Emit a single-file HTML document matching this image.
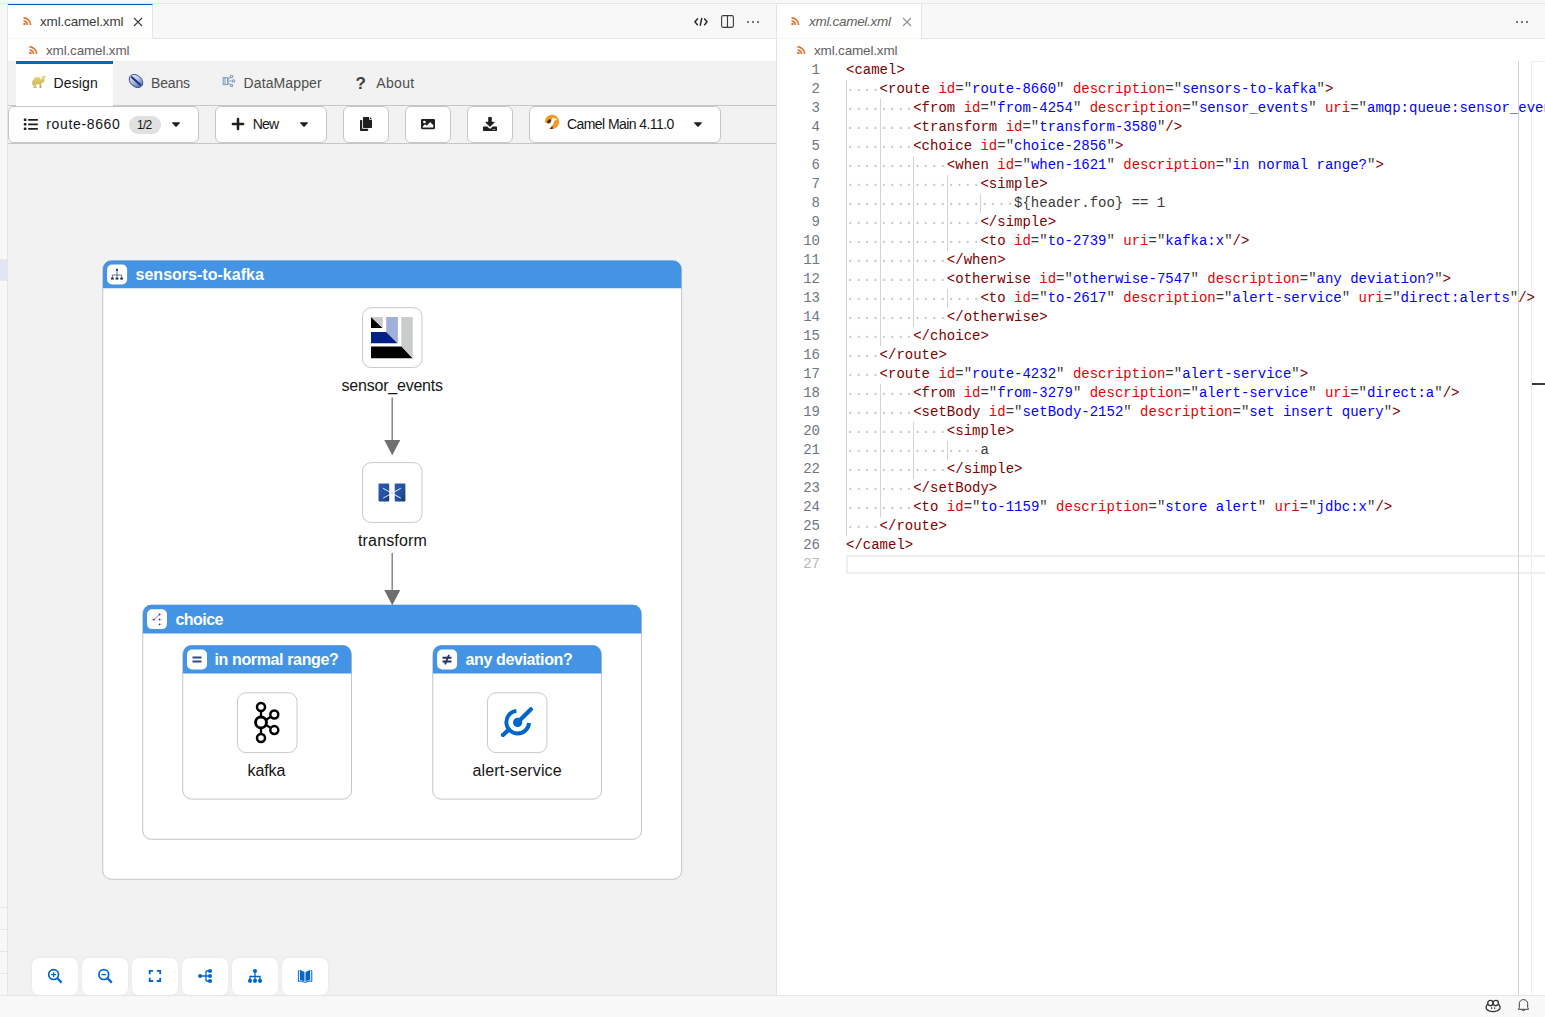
<!DOCTYPE html>
<html lang="en">
<head>
<meta charset="utf-8">
<title>xml.camel.xml</title>
<style>
*{box-sizing:border-box;margin:0;padding:0}
html,body{width:1545px;height:1017px;overflow:hidden;background:#f8f8f8}
body{position:relative;font-family:"Liberation Sans",sans-serif;font-size:13px;color:#3b3b3b}
.abs{position:absolute}
/* ---------- vscode chrome ---------- */
#topline{left:0;top:3px;width:1545px;height:1px;background:#e5e5e5}
#sidebar{left:0;top:4px;width:7px;height:991px;background:#f8f8f8}
#sideborder{left:7px;top:4px;width:1px;height:991px;background:#e5e5e5}
#sidesel{left:0;top:259px;width:7px;height:22px;background:#e4e6f1}
.tabbar{top:4px;height:35px;background:#f8f8f8;border-bottom:1px solid #e5e5e5}
.tab{top:4px;height:35px;background:#fff;border-right:1px solid #e5e5e5}
.tabtxt{font-size:13px;white-space:nowrap;line-height:16px}
.crumb{top:39px;height:22px;background:#fff}
#statusbar{left:0;top:995px;width:1545px;height:22px;background:#f8f8f8;border-top:1px solid #e5e5e5}
#split{left:776px;top:4px;width:1px;height:991px;background:#e5e5e5}
/* ---------- kaoto ---------- */
#kaoto{left:8px;top:61px;width:768px;height:934px;background:#f2f2f2;overflow:hidden}
.tx{white-space:nowrap;line-height:1;color:#151515}
.btn{background:#fff;border:1px solid #c5c5c5;border-radius:6px;height:37px;top:106px}
.ctl{background:#fff;border-radius:7px;width:46px;height:37px;top:958px;box-shadow:0 0 3px rgba(0,0,0,.07)}
.gt{white-space:nowrap;line-height:1;font-size:16px;font-weight:700;color:#fff}
.nl{white-space:nowrap;line-height:1;font-size:16px;color:#151515}
/* ---------- editor ---------- */
#editor{left:777px;top:61px;width:768px;height:934px;background:#fff;overflow:hidden}
.ln{left:0;width:43px;text-align:right;font:14px/19px "Liberation Mono",monospace;color:#6e7681;height:19px}
.cl{left:69px;font:14px/19px "Liberation Mono",monospace;color:#3b3b3b;white-space:pre;height:19px}
.ig{width:1px;height:19px;background:#d3d3d3}
.t{color:#800000}.a{color:#e50000}.v{color:#0000ff}.w{color:#c4c4c4;position:relative;top:0.6px}
</style>
</head>
<body>
<div class="abs" id="topline"></div>
<div class="abs" id="sidebar"></div>
<div class="abs" id="sidesel"></div>
<div class="abs" id="sideborder"></div>
<div class="abs" style="left:0;top:907px;width:7px;height:1px;background:#e5e5e5"></div>
<div class="abs" style="left:0;top:929px;width:7px;height:1px;background:#e5e5e5"></div>
<div class="abs" style="left:0;top:951px;width:7px;height:1px;background:#e5e5e5"></div>
<div class="abs" style="left:0;top:973px;width:7px;height:1px;background:#e5e5e5"></div>

<!-- left group tabs -->
<div class="abs tabbar" style="left:8px;width:768px"></div>
<div class="abs tab" style="left:8px;width:145px;border-top:1px solid #005fb8;border-bottom:1px solid #f5f5f5"></div>
<div class="abs tabtxt" style="left:40px;top:13.6px;font-size:13.5px;letter-spacing:-0.17px">xml.camel.xml</div>
<div class="abs crumb" style="left:8px;width:768px"></div>
<div class="abs tabtxt" style="left:46px;top:42.6px;color:#616161;font-size:13.5px;letter-spacing:-0.17px">xml.camel.xml</div>

<!-- right group tabs -->
<div class="abs" id="split"></div>
<div class="abs tabbar" style="left:777px;width:768px"></div>
<div class="abs tab" style="left:777px;width:145px;border-bottom:1px solid #f5f5f5"></div>
<div class="abs tabtxt" style="left:809px;top:13.6px;font-style:italic;color:#616161;font-size:13.5px;letter-spacing:-0.3px">xml.camel.xml</div>
<div class="abs crumb" style="left:777px;width:768px"></div>
<div class="abs tabtxt" style="left:814px;top:42.6px;color:#616161;font-size:13.5px;letter-spacing:-0.17px">xml.camel.xml</div>

<!-- KAOTO -->
<div class="abs" id="kaoto"></div>
<!-- PF tabs -->
<div class="abs" style="left:8px;top:105px;width:768px;height:1px;background:#c7c7c7"></div>
<div class="abs" style="left:16px;top:61px;width:97px;height:45px;background:#fff;border-top:3px solid #0066cc"></div>
<div class="abs tx" style="left:53.5px;top:76.2px;font-size:14px;letter-spacing:0.14px">Design</div>
<div class="abs tx" style="left:151px;top:76.2px;font-size:14px;letter-spacing:-0.17px;color:#4d4d4d">Beans</div>
<div class="abs tx" style="left:243.5px;top:76.2px;font-size:14px;letter-spacing:0.12px;color:#4d4d4d">DataMapper</div>
<div class="abs tx" style="left:376.25px;top:76.2px;font-size:14px;letter-spacing:0.33px;color:#4d4d4d">About</div>
<div class="abs tx" style="left:355.5px;top:74.6px;font-size:17px;font-weight:700;color:#3d3d3d">?</div>

<!-- toolbar -->
<div class="abs" style="left:8px;top:143px;width:768px;height:1px;background:#c7c7c7"></div>
<div class="abs btn" style="left:8px;width:191px"></div>
<div class="abs btn" style="left:215px;width:112px"></div>
<div class="abs btn" style="left:343px;width:46px"></div>
<div class="abs btn" style="left:405px;width:46px"></div>
<div class="abs btn" style="left:467px;width:46px"></div>
<div class="abs btn" style="left:529px;width:192px"></div>
<div class="abs tx" style="left:46.25px;top:117.4px;font-size:14px;letter-spacing:0.65px">route-8660</div>
<div class="abs" style="left:129px;top:116px;width:32px;height:18px;border-radius:9px;background:#e0e0e0"></div>
<div class="abs tx" style="left:137px;top:119.3px;font-size:12px;letter-spacing:-0.75px">1/2</div>
<div class="abs tx" style="left:252.75px;top:117.4px;font-size:14px;letter-spacing:-0.82px">New</div>
<div class="abs tx" style="left:567px;top:117.4px;font-size:14px;letter-spacing:-0.57px">Camel Main 4.11.0</div>

<!-- canvas: groups + nodes (svg) -->
<svg class="abs" style="left:90px;top:250px" width="610" height="640" viewBox="90 250 610 640">
<rect x="102.75" y="260.9" width="578.85" height="618.35" rx="8.5" fill="#fff" stroke="#c4c4c4" stroke-width="1"/>
<path d="M102.95 288.3V268.90a8.5 8.5 0 0 1 8.5 -8.5H672.90a8.5 8.5 0 0 1 8.5 8.5V288.3z" fill="#4394e5"/>
<rect x="107.1" y="264.6" width="20" height="19.8" rx="5" fill="#fff"/>
<rect x="142.75" y="605.3" width="498.75" height="233.95" rx="8.5" fill="#fff" stroke="#c4c4c4" stroke-width="1"/>
<path d="M142.95 633.4V613.30a8.5 8.5 0 0 1 8.5 -8.5H632.80a8.5 8.5 0 0 1 8.5 8.5V633.4z" fill="#4394e5"/>
<rect x="147" y="609.3" width="20" height="19.8" rx="5" fill="#fff"/>
<rect x="182.75" y="645.75" width="168.75" height="153.35" rx="8.5" fill="#fff" stroke="#c4c4c4" stroke-width="1"/>
<path d="M182.95 673.5V653.75a8.5 8.5 0 0 1 8.5 -8.5H342.80a8.5 8.5 0 0 1 8.5 8.5V673.5z" fill="#4394e5"/>
<rect x="187" y="649.6" width="20" height="19.8" rx="5" fill="#fff"/>
<rect x="432.75" y="645.75" width="168.75" height="153.35" rx="8.5" fill="#fff" stroke="#c4c4c4" stroke-width="1"/>
<path d="M432.95 673.5V653.75a8.5 8.5 0 0 1 8.5 -8.5H592.80a8.5 8.5 0 0 1 8.5 8.5V673.5z" fill="#4394e5"/>
<rect x="437.1" y="649.6" width="20" height="19.8" rx="5" fill="#fff"/>
<rect x="362.5" y="307.7" width="59.5" height="59.8" rx="8.5" fill="#fff" stroke="#cacaca" stroke-width="1"/>
<rect x="362.5" y="462.6" width="59.5" height="59.8" rx="8.5" fill="#fff" stroke="#cacaca" stroke-width="1"/>
<rect x="237.5" y="692.8" width="59.5" height="59.8" rx="8.5" fill="#fff" stroke="#cacaca" stroke-width="1"/>
<rect x="487.5" y="692.8" width="59.5" height="59.8" rx="8.5" fill="#fff" stroke="#cacaca" stroke-width="1"/>
</svg>
<div class="abs gt" style="left:135.5px;top:266.7px;letter-spacing:0.02px">sensors-to-kafka</div>
<!-- choice group -->
<div class="abs gt" style="left:175.5px;top:611.5px;letter-spacing:-0.56px">choice</div>
<!-- when group -->
<div class="abs gt" style="left:214.5px;top:651.8px;letter-spacing:-0.37px">in normal range?</div>
<!-- otherwise group -->
<div class="abs gt" style="left:465.5px;top:651.8px;letter-spacing:-0.37px">any deviation?</div>

<!-- nodes -->
<div class="abs nl" style="left:341.5px;top:378.3px;letter-spacing:-0.21px">sensor_events</div>
<div class="abs nl" style="left:358px;top:532.7px;letter-spacing:0.16px">transform</div>
<div class="abs nl" style="left:247.5px;top:763.3px;letter-spacing:-0.09px">kafka</div>
<div class="abs nl" style="left:472.5px;top:763.3px;letter-spacing:0.17px">alert-service</div>

<!-- edges -->
<svg class="abs" style="left:380px;top:395px" width="24" height="215" viewBox="380 395 24 215">
<path d="M392.25 397.5V441" stroke="#8a8d90" stroke-width="1.6" fill="none"/>
<path d="M384.25 440h16l-8 15.25z" fill="#6f6f6f"/>
<path d="M392.25 553V591" stroke="#8a8d90" stroke-width="1.6" fill="none"/>
<path d="M384.25 590h16l-8 15.25z" fill="#6f6f6f"/>
</svg>

<!-- control bar -->
<div class="abs ctl" style="left:32px"></div>
<div class="abs ctl" style="left:82px"></div>
<div class="abs ctl" style="left:132px"></div>
<div class="abs ctl" style="left:182px"></div>
<div class="abs ctl" style="left:232px"></div>
<div class="abs ctl" style="left:282px"></div>


<!-- EDITOR -->
<div class="abs" id="editor">
<div class="abs" style="left:69px;top:494px;width:700px;height:19px;border:2px solid #eeeeee;border-right:0"></div>
<div class="abs" style="left:741px;top:0;width:1px;height:934px;background:#d4d4d4"></div>
<div class="abs" style="left:754px;top:0;width:14px;height:934px;border-left:1px solid #eeeeee;border-top:1px solid #eeeeee"></div>
<div class="abs" style="left:755px;top:322px;width:13px;height:2px;background:#3b3b3b"></div>
<div class="abs ln" style="top:0px">1</div>
<div class="abs cl" style="top:0px"><span class="t">&lt;camel</span><span class="t">&gt;</span></div>
<div class="abs ln" style="top:19px">2</div>
<div class="abs cl" style="top:19px"><span class="w">····</span><span class="t">&lt;route</span> <span class="a">id</span>=&quot;<span class="v">route-8660</span>&quot; <span class="a">description</span>=&quot;<span class="v">sensors-to-kafka</span>&quot;<span class="t">&gt;</span></div>
<div class="abs ig" style="left:69px;top:19px"></div>
<div class="abs ln" style="top:38px">3</div>
<div class="abs cl" style="top:38px"><span class="w">········</span><span class="t">&lt;from</span> <span class="a">id</span>=&quot;<span class="v">from-4254</span>&quot; <span class="a">description</span>=&quot;<span class="v">sensor_events</span>&quot; <span class="a">uri</span>=&quot;<span class="v">amqp:queue:sensor_events</span>&quot;<span class="t">/&gt;</span></div>
<div class="abs ig" style="left:69px;top:38px"></div>
<div class="abs ig" style="left:103px;top:38px"></div>
<div class="abs ln" style="top:57px">4</div>
<div class="abs cl" style="top:57px"><span class="w">········</span><span class="t">&lt;transform</span> <span class="a">id</span>=&quot;<span class="v">transform-3580</span>&quot;<span class="t">/&gt;</span></div>
<div class="abs ig" style="left:69px;top:57px"></div>
<div class="abs ig" style="left:103px;top:57px"></div>
<div class="abs ln" style="top:76px">5</div>
<div class="abs cl" style="top:76px"><span class="w">········</span><span class="t">&lt;choice</span> <span class="a">id</span>=&quot;<span class="v">choice-2856</span>&quot;<span class="t">&gt;</span></div>
<div class="abs ig" style="left:69px;top:76px"></div>
<div class="abs ig" style="left:103px;top:76px"></div>
<div class="abs ln" style="top:95px">6</div>
<div class="abs cl" style="top:95px"><span class="w">············</span><span class="t">&lt;when</span> <span class="a">id</span>=&quot;<span class="v">when-1621</span>&quot; <span class="a">description</span>=&quot;<span class="v">in normal range?</span>&quot;<span class="t">&gt;</span></div>
<div class="abs ig" style="left:69px;top:95px"></div>
<div class="abs ig" style="left:103px;top:95px"></div>
<div class="abs ig" style="left:136px;top:95px"></div>
<div class="abs ln" style="top:114px">7</div>
<div class="abs cl" style="top:114px"><span class="w">················</span><span class="t">&lt;simple</span><span class="t">&gt;</span></div>
<div class="abs ig" style="left:69px;top:114px"></div>
<div class="abs ig" style="left:103px;top:114px"></div>
<div class="abs ig" style="left:136px;top:114px"></div>
<div class="abs ig" style="left:170px;top:114px"></div>
<div class="abs ln" style="top:133px">8</div>
<div class="abs cl" style="top:133px"><span class="w">····················</span>${header.foo} == 1</div>
<div class="abs ig" style="left:69px;top:133px"></div>
<div class="abs ig" style="left:103px;top:133px"></div>
<div class="abs ig" style="left:136px;top:133px"></div>
<div class="abs ig" style="left:170px;top:133px"></div>
<div class="abs ig" style="left:203px;top:133px"></div>
<div class="abs ln" style="top:152px">9</div>
<div class="abs cl" style="top:152px"><span class="w">················</span><span class="t">&lt;/simple</span><span class="t">&gt;</span></div>
<div class="abs ig" style="left:69px;top:152px"></div>
<div class="abs ig" style="left:103px;top:152px"></div>
<div class="abs ig" style="left:136px;top:152px"></div>
<div class="abs ig" style="left:170px;top:152px"></div>
<div class="abs ln" style="top:171px">10</div>
<div class="abs cl" style="top:171px"><span class="w">················</span><span class="t">&lt;to</span> <span class="a">id</span>=&quot;<span class="v">to-2739</span>&quot; <span class="a">uri</span>=&quot;<span class="v">kafka:x</span>&quot;<span class="t">/&gt;</span></div>
<div class="abs ig" style="left:69px;top:171px"></div>
<div class="abs ig" style="left:103px;top:171px"></div>
<div class="abs ig" style="left:136px;top:171px"></div>
<div class="abs ig" style="left:170px;top:171px"></div>
<div class="abs ln" style="top:190px">11</div>
<div class="abs cl" style="top:190px"><span class="w">············</span><span class="t">&lt;/when</span><span class="t">&gt;</span></div>
<div class="abs ig" style="left:69px;top:190px"></div>
<div class="abs ig" style="left:103px;top:190px"></div>
<div class="abs ig" style="left:136px;top:190px"></div>
<div class="abs ln" style="top:209px">12</div>
<div class="abs cl" style="top:209px"><span class="w">············</span><span class="t">&lt;otherwise</span> <span class="a">id</span>=&quot;<span class="v">otherwise-7547</span>&quot; <span class="a">description</span>=&quot;<span class="v">any deviation?</span>&quot;<span class="t">&gt;</span></div>
<div class="abs ig" style="left:69px;top:209px"></div>
<div class="abs ig" style="left:103px;top:209px"></div>
<div class="abs ig" style="left:136px;top:209px"></div>
<div class="abs ln" style="top:228px">13</div>
<div class="abs cl" style="top:228px"><span class="w">················</span><span class="t">&lt;to</span> <span class="a">id</span>=&quot;<span class="v">to-2617</span>&quot; <span class="a">description</span>=&quot;<span class="v">alert-service</span>&quot; <span class="a">uri</span>=&quot;<span class="v">direct:alerts</span>&quot;<span class="t">/&gt;</span></div>
<div class="abs ig" style="left:69px;top:228px"></div>
<div class="abs ig" style="left:103px;top:228px"></div>
<div class="abs ig" style="left:136px;top:228px"></div>
<div class="abs ig" style="left:170px;top:228px"></div>
<div class="abs ln" style="top:247px">14</div>
<div class="abs cl" style="top:247px"><span class="w">············</span><span class="t">&lt;/otherwise</span><span class="t">&gt;</span></div>
<div class="abs ig" style="left:69px;top:247px"></div>
<div class="abs ig" style="left:103px;top:247px"></div>
<div class="abs ig" style="left:136px;top:247px"></div>
<div class="abs ln" style="top:266px">15</div>
<div class="abs cl" style="top:266px"><span class="w">········</span><span class="t">&lt;/choice</span><span class="t">&gt;</span></div>
<div class="abs ig" style="left:69px;top:266px"></div>
<div class="abs ig" style="left:103px;top:266px"></div>
<div class="abs ln" style="top:285px">16</div>
<div class="abs cl" style="top:285px"><span class="w">····</span><span class="t">&lt;/route</span><span class="t">&gt;</span></div>
<div class="abs ig" style="left:69px;top:285px"></div>
<div class="abs ln" style="top:304px">17</div>
<div class="abs cl" style="top:304px"><span class="w">····</span><span class="t">&lt;route</span> <span class="a">id</span>=&quot;<span class="v">route-4232</span>&quot; <span class="a">description</span>=&quot;<span class="v">alert-service</span>&quot;<span class="t">&gt;</span></div>
<div class="abs ig" style="left:69px;top:304px"></div>
<div class="abs ln" style="top:323px">18</div>
<div class="abs cl" style="top:323px"><span class="w">········</span><span class="t">&lt;from</span> <span class="a">id</span>=&quot;<span class="v">from-3279</span>&quot; <span class="a">description</span>=&quot;<span class="v">alert-service</span>&quot; <span class="a">uri</span>=&quot;<span class="v">direct:a</span>&quot;<span class="t">/&gt;</span></div>
<div class="abs ig" style="left:69px;top:323px"></div>
<div class="abs ig" style="left:103px;top:323px"></div>
<div class="abs ln" style="top:342px">19</div>
<div class="abs cl" style="top:342px"><span class="w">········</span><span class="t">&lt;setBody</span> <span class="a">id</span>=&quot;<span class="v">setBody-2152</span>&quot; <span class="a">description</span>=&quot;<span class="v">set insert query</span>&quot;<span class="t">&gt;</span></div>
<div class="abs ig" style="left:69px;top:342px"></div>
<div class="abs ig" style="left:103px;top:342px"></div>
<div class="abs ln" style="top:361px">20</div>
<div class="abs cl" style="top:361px"><span class="w">············</span><span class="t">&lt;simple</span><span class="t">&gt;</span></div>
<div class="abs ig" style="left:69px;top:361px"></div>
<div class="abs ig" style="left:103px;top:361px"></div>
<div class="abs ig" style="left:136px;top:361px"></div>
<div class="abs ln" style="top:380px">21</div>
<div class="abs cl" style="top:380px"><span class="w">················</span>a</div>
<div class="abs ig" style="left:69px;top:380px"></div>
<div class="abs ig" style="left:103px;top:380px"></div>
<div class="abs ig" style="left:136px;top:380px"></div>
<div class="abs ig" style="left:170px;top:380px"></div>
<div class="abs ln" style="top:399px">22</div>
<div class="abs cl" style="top:399px"><span class="w">············</span><span class="t">&lt;/simple</span><span class="t">&gt;</span></div>
<div class="abs ig" style="left:69px;top:399px"></div>
<div class="abs ig" style="left:103px;top:399px"></div>
<div class="abs ig" style="left:136px;top:399px"></div>
<div class="abs ln" style="top:418px">23</div>
<div class="abs cl" style="top:418px"><span class="w">········</span><span class="t">&lt;/setBody</span><span class="t">&gt;</span></div>
<div class="abs ig" style="left:69px;top:418px"></div>
<div class="abs ig" style="left:103px;top:418px"></div>
<div class="abs ln" style="top:437px">24</div>
<div class="abs cl" style="top:437px"><span class="w">········</span><span class="t">&lt;to</span> <span class="a">id</span>=&quot;<span class="v">to-1159</span>&quot; <span class="a">description</span>=&quot;<span class="v">store alert</span>&quot; <span class="a">uri</span>=&quot;<span class="v">jdbc:x</span>&quot;<span class="t">/&gt;</span></div>
<div class="abs ig" style="left:69px;top:437px"></div>
<div class="abs ig" style="left:103px;top:437px"></div>
<div class="abs ln" style="top:456px">25</div>
<div class="abs cl" style="top:456px"><span class="w">····</span><span class="t">&lt;/route</span><span class="t">&gt;</span></div>
<div class="abs ig" style="left:69px;top:456px"></div>
<div class="abs ln" style="top:475px">26</div>
<div class="abs cl" style="top:475px"><span class="t">&lt;/camel</span><span class="t">&gt;</span></div>
<div class="abs ln" style="top:494px;color:#b4b8bd">27</div>
<div class="abs cl" style="top:494px"></div>
</div>

<div class="abs" id="statusbar"></div>
<!-- ===== ICONS ===== -->
<!-- vscode file icons (rss-like) -->
<svg class="abs" style="left:23.4px;top:17.2px" width="9" height="9" viewBox="0 0 9 9"><g fill="none" stroke="#e0742d" stroke-width="1.7"><path d="M0.5 4a4 4 0 0 1 4 4"/><path d="M0.5 0.900a7.100 7.100 0 0 1 7.100 7.100"/></g><circle cx="1.500" cy="7" r="1.250" fill="#e0742d"/></svg>
<svg class="abs" style="left:29.4px;top:46.2px" width="9" height="9" viewBox="0 0 9 9"><g fill="none" stroke="#e0742d" stroke-width="1.7"><path d="M0.5 4a4 4 0 0 1 4 4"/><path d="M0.5 0.900a7.100 7.100 0 0 1 7.100 7.100"/></g><circle cx="1.500" cy="7" r="1.250" fill="#e0742d"/></svg>
<svg class="abs" style="left:791.4px;top:17.2px" width="9" height="9" viewBox="0 0 9 9"><g fill="none" stroke="#e0742d" stroke-width="1.7"><path d="M0.5 4a4 4 0 0 1 4 4"/><path d="M0.5 0.900a7.100 7.100 0 0 1 7.100 7.100"/></g><circle cx="1.500" cy="7" r="1.250" fill="#e0742d"/></svg>
<svg class="abs" style="left:797.4px;top:46.2px" width="9" height="9" viewBox="0 0 9 9"><g fill="none" stroke="#e0742d" stroke-width="1.7"><path d="M0.5 4a4 4 0 0 1 4 4"/><path d="M0.5 0.900a7.100 7.100 0 0 1 7.100 7.100"/></g><circle cx="1.500" cy="7" r="1.250" fill="#e0742d"/></svg>
<!-- tab close -->
<svg class="abs" style="left:133px;top:17px" width="10" height="10" viewBox="0 0 10 10"><path d="M1 1l8 8M9 1l-8 8" stroke="#3b3b3b" stroke-width="1.1" fill="none"/></svg>
<svg class="abs" style="left:902px;top:17px" width="10" height="10" viewBox="0 0 10 10"><path d="M1 1l8 8M9 1l-8 8" stroke="#8e8e8e" stroke-width="1.1" fill="none"/></svg>
<!-- editor actions -->
<svg class="abs" style="left:693px;top:17px" width="16" height="10" viewBox="0 0 16 10"><path d="M4.400 1.900L1.900 4.800l2.500 2.900M11.600 1.900l2.500 2.900-2.500 2.900M8.700 1.500L7.300 8.200" stroke="#2b2b2b" stroke-width="1.500" fill="none" stroke-linecap="round" stroke-linejoin="round"/></svg>
<svg class="abs" style="left:720px;top:14px" width="15" height="15" viewBox="0 0 15 15"><rect x="1.6" y="1.6" width="11.8" height="11.8" rx="1.6" fill="none" stroke="#3b3b3b" stroke-width="1.1"/><path d="M7.5 1.6v11.8" stroke="#3b3b3b" stroke-width="1.1"/></svg>
<svg class="abs" style="left:746px;top:20px" width="14" height="4" viewBox="0 0 14 4"><circle cx="2" cy="2" r="0.95" fill="#3b3b3b"/><circle cx="7" cy="2" r="0.95" fill="#3b3b3b"/><circle cx="12" cy="2" r="0.95" fill="#3b3b3b"/></svg>
<svg class="abs" style="left:1515px;top:20px" width="14" height="4" viewBox="0 0 14 4"><circle cx="2" cy="2" r="0.95" fill="#3b3b3b"/><circle cx="7" cy="2" r="0.95" fill="#3b3b3b"/><circle cx="12" cy="2" r="0.95" fill="#3b3b3b"/></svg>

<!-- PF tab icons -->
<svg class="abs" style="left:31px;top:75px" width="16" height="14" viewBox="0 0 16 14"><defs><linearGradient id="cg1" x1="0" y1="0" x2="0" y2="1"><stop offset="0" stop-color="#e3d276"/><stop offset="0.700" stop-color="#d2bd5e"/><stop offset="1" stop-color="#a8965a"/></linearGradient></defs><path d="M11 1.200L14.600 0.900 14.800 2.200 13.200 2.700 13.600 6 12.800 7.300 11.200 8 10.300 8.600 10.200 12.900H8.400L8.600 9.200 5 9.400 5.800 12.700H2.200L2.800 11.500 1.400 9.600 0.900 7 2.400 4.600 4.200 2 5.300 1.600 6.400 3.200 7.600 1.400 9.200 3.600 10.400 5z" fill="url(#cg1)"/><path d="M3.400 10.200l1 1.800" stroke="#fff" stroke-width="0.900"/></svg>
<svg class="abs" style="left:127px;top:72px" width="18" height="18" viewBox="0 0 18 18"><defs><linearGradient id="bg1" x1="0" y1="0" x2="1" y2="0.300"><stop offset="0" stop-color="#edf2f8"/><stop offset="0.500" stop-color="#b9cbe4"/><stop offset="1" stop-color="#5c7fbd"/></linearGradient></defs><g transform="rotate(42 9 9)"><ellipse cx="9" cy="9" rx="7.600" ry="5.600" fill="url(#bg1)" stroke="#33478f" stroke-width="0.900"/><path d="M2.600 9h12.800" stroke="#1c2f7c" stroke-width="1.900"/></g></svg>
<svg class="abs" style="left:222px;top:74px" width="14" height="14" viewBox="0 0 14 14"><g fill="none" stroke="#7f9fc2" stroke-width="1.1"><rect x="1.2" y="3.6" width="4.4" height="7"/><path d="M3 3.6v7M5.6 7h5.2M5.6 5.6l3-2.6M5.6 8.4l3 2.8"/><circle cx="9.6" cy="2.4" r="1.2"/><circle cx="11.6" cy="7" r="1.2"/><circle cx="9.6" cy="11.6" r="1.2"/></g></svg>

<!-- toolbar icons -->
<svg class="abs" style="left:23px;top:118px" width="16" height="13" viewBox="0 0 16 13"><g fill="#1f1f1f"><rect x="0.8" y="0.5" width="2.6" height="2.5" rx="0.5"/><rect x="0.8" y="5" width="2.6" height="2.5" rx="0.5"/><rect x="0.8" y="9.5" width="2.6" height="2.5" rx="0.5"/><rect x="5" y="0.9" width="10" height="1.8" rx="0.7"/><rect x="5" y="5.4" width="10" height="1.8" rx="0.7"/><rect x="5" y="9.9" width="10" height="1.8" rx="0.7"/></g></svg>
<svg class="abs cr" style="left:171px;top:121px" width="10" height="7" viewBox="0 0 10 7"><path d="M1.5 1.2h7a0.5 0.5 0 0 1 0.4 0.8L5.4 5.8a0.5 0.5 0 0 1 -0.8 0L1.1 2a0.5 0.5 0 0 1 0.4-0.8z" fill="#1f1f1f"/></svg>
<svg class="abs" style="left:231px;top:117px" width="14" height="14" viewBox="0 0 14 14"><path d="M7 1.9v10.2M1.9 7h10.2" stroke="#1f1f1f" stroke-width="2.5" stroke-linecap="round"/></svg>
<svg class="abs cr" style="left:299px;top:121px" width="10" height="7" viewBox="0 0 10 7"><path d="M1.5 1.2h7a0.5 0.5 0 0 1 0.4 0.8L5.4 5.8a0.5 0.5 0 0 1 -0.8 0L1.1 2a0.5 0.5 0 0 1 0.4-0.8z" fill="#1f1f1f"/></svg>
<svg class="abs" style="left:359px;top:116px" width="14" height="16" viewBox="0 0 14 16"><g fill="#1f1f1f"><path d="M4.8 1h5.4v2.8h2.8v7.4a0.8 0.8 0 0 1-0.8 0.8H4.8a0.8 0.8 0 0 1-0.8-0.8V1.8A0.8 0.8 0 0 1 4.800 1z"/><path d="M11 1.2l1.9 1.9H11z"/><path d="M1 4.800a0.8 0.8 0 0 1 0.8-0.8H3.200v8.800h6v1.400a0.800 0.800 0 0 1-0.800 0.800H1.800a0.800 0.800 0 0 1-0.800-0.800z"/></g></svg>
<svg class="abs" style="left:421px;top:118px" width="14" height="12" viewBox="0 0 14 12"><rect x="0" y="1" width="14" height="10.200" rx="1.300" fill="#1f1f1f"/><circle cx="3.400" cy="4" r="1.350" fill="#fff"/><path d="M1.700 9.400V8.600l2.400-2.400 1.500 1.500 3.600-3.600 3.100 3.100v2.200z" fill="#fff"/></svg>
<svg class="abs" style="left:483px;top:116px" width="14" height="16" viewBox="0 0 14 16"><g fill="#1f1f1f"><path d="M5.800 1h2.400a0.600 0.600 0 0 1 0.600 0.600V5.800h2.200a0.500 0.500 0 0 1 0.350 0.850L7.400 10.600a0.550 0.550 0 0 1-0.800 0L2.650 6.650A0.500 0.500 0 0 1 3 5.800h2.200V1.600A0.600 0.600 0 0 1 5.800 1z"/><path d="M0.700 10.600h3.600l1.500 1.500a1.700 1.700 0 0 0 2.400 0l1.500-1.500h3.600a0.700 0.700 0 0 1 0.700 0.700v3a0.700 0.700 0 0 1-0.700 0.700H0.700a0.700 0.700 0 0 1-0.700-0.700v-3a0.700 0.700 0 0 1 0.700-0.700z"/></g><circle cx="11.800" cy="13.500" r="0.550" fill="#fff"/><circle cx="10" cy="13.500" r="0.550" fill="#fff"/></svg>
<svg class="abs" style="left:544px;top:114px" width="16" height="16" viewBox="0 0 16 16"><circle cx="8" cy="7.900" r="7.150" fill="#f69923"/><path d="M8.200 4.200L8.900 3.800 13.300 5.300 10.400 6.700 8.700 11.400 5.600 15.200 3 14 0.500 10 0.900 8.200 3.600 9.600 7.200 7.200z" fill="#fff"/><path d="M2.600 8L4.700 5.600 6.600 5.200 7.300 7 6 9.200 4.400 9.600z" fill="#5a2d05"/><path d="M5.500 14.900L8.500 11.600 8.800 14.900 7 15.100z" fill="#5a2d05"/></svg>
<svg class="abs cr" style="left:693px;top:121px" width="10" height="7" viewBox="0 0 10 7"><path d="M1.500 1.200h7a0.500 0.500 0 0 1 0.400 0.800L5.400 5.800a0.500 0.500 0 0 1 -0.800 0L1.100 2a0.500 0.500 0 0 1 0.400-0.800z" fill="#1f1f1f"/></svg>

<!-- group header icons -->
<svg class="abs" style="left:110px;top:268px" width="14" height="13" viewBox="0 0 14 13"><g stroke="#3c4f7c" stroke-width="0.8" fill="none"><path d="M7 2v5M2.400 10V7h9.200v3M7 7v3"/></g><g fill="#24356b"><rect x="6" y="0.800" width="2" height="2"/><rect x="1" y="9.600" width="2.800" height="2"/><rect x="5.600" y="9.600" width="2.800" height="2"/><rect x="10.200" y="9.600" width="2.800" height="2"/></g></svg>
<svg class="abs" style="left:150px;top:612px" width="14" height="14" viewBox="0 0 14 14"><path d="M1.600 7.600h2.400l5.400-5" stroke="#6b7a9a" stroke-width="0.8" fill="none"/><g fill="#2b3f6f"><circle cx="4" cy="7.600" r="0.900"/><circle cx="9.600" cy="2.500" r="0.900"/><circle cx="9.600" cy="7.500" r="0.900"/><circle cx="9.600" cy="12.300" r="0.900"/></g><path d="M10.500 2.500h2M10.500 7.500h2M10.500 12.300h2" stroke="#c5cad6" stroke-width="0.800"/></svg>
<svg class="abs" style="left:191px;top:654px" width="12" height="11" viewBox="0 0 12 11"><path d="M1.500 3.500h9M1.500 7.500h9" stroke="#2e4a80" stroke-width="2.200"/></svg>
<svg class="abs" style="left:441px;top:653px" width="12" height="13" viewBox="0 0 12 13"><path d="M1.500 4.700h9M1.500 8.500h9" stroke="#24355f" stroke-width="1.900"/><path d="M8 1.800L4 11.300" stroke="#24355f" stroke-width="1.700"/></svg>

<!-- node icons -->
<svg class="abs" style="left:371px;top:317px" width="42" height="42" viewBox="0 0 42 42"><path d="M0 0v11h11.500z" fill="#000"/><path d="M0.600 0H11.800v11z" fill="#cbccce"/><path d="M15.200 0h11.700v26L15.200 15z" fill="#a1afdb"/><path d="M0 15.100h15.200l11.300 11.200H0z" fill="#001f87"/><path d="M30.300 0h11.500v41L30.300 29.500z" fill="#cbccce"/><path d="M0 29.600h30.300l11.200 11.600H0z" fill="#000"/></svg>
<svg class="abs" style="left:377px;top:482px" width="30" height="22" viewBox="0 0 30 22"><defs><linearGradient id="tg1" x1="0" y1="0" x2="1" y2="1"><stop offset="0" stop-color="#2a5cb4"/><stop offset="0.600" stop-color="#23509f"/><stop offset="1" stop-color="#16376f"/></linearGradient></defs><rect x="1.500" y="1.600" width="10.700" height="17.800" rx="0.800" fill="url(#tg1)"/><rect x="17.700" y="1.600" width="10.700" height="17.800" rx="0.800" fill="url(#tg1)"/><path d="M6.100 6.300l8.200 4.600M6.100 16.200l8.200-4.600M23.800 6.300l-8.200 4.600M23.800 16.200l-8.200-4.600" stroke="#fff" stroke-width="0.900" fill="none"/><circle cx="15" cy="11.300" r="1.200" fill="#fff" stroke="#b9c7df" stroke-width="0.500"/></svg>
<svg class="abs" style="left:250px;top:700px" width="34" height="46" viewBox="250 700 34 46"><g fill="#fff" stroke="#000"><path d="M261 711v7.500M261 726.500v7.500M265.500 720l5.500-3.300M265.500 724.800l5.500 3.300" stroke-width="2.300" fill="none"/><circle cx="261" cy="722.400" r="5.450" stroke-width="2.900"/><circle cx="261" cy="707" r="4" stroke-width="2.500"/><circle cx="261" cy="738" r="4" stroke-width="2.500"/><circle cx="274.300" cy="714.500" r="4" stroke-width="2.500"/><circle cx="274.300" cy="730.100" r="4" stroke-width="2.500"/></g></svg>
<svg class="abs" style="left:498px;top:704px" width="40" height="38" viewBox="498 704 40 38"><g fill="none" stroke="#0066cc" stroke-linecap="round"><path d="M516.400 710.900A11.350 11.350 0 1 0 529 723" stroke-width="3.900" stroke-linecap="butt"/><path d="M518 722l12.900-12.700" stroke-width="4.200"/><path d="M507.800 730.400l-4.800 4.700" stroke-width="4.200"/></g><circle cx="517.600" cy="722.400" r="4.600" fill="#0066cc"/></svg>

<!-- control bar icons -->
<svg class="abs" style="left:46px;top:967px" width="18" height="18" viewBox="46 967 18 18"><g fill="none" stroke="#0066cc"><circle cx="53.600" cy="974.600" r="4.900" stroke-width="1.700"/><path d="M57.300 978.300l4.300 4.300" stroke-width="2.200"/><path d="M51.200 974.600h4.800M53.600 972.200v4.800" stroke-width="1.300"/></g></svg>
<svg class="abs" style="left:96px;top:967px" width="18" height="18" viewBox="96 967 18 18"><g fill="none" stroke="#0066cc"><circle cx="103.800" cy="974.600" r="4.900" stroke-width="1.700"/><path d="M107.500 978.300l4.300 4.300" stroke-width="2.200"/><path d="M101.400 974.600h4.800" stroke-width="1.300"/></g></svg>
<svg class="abs" style="left:147px;top:968px" width="16" height="16" viewBox="147 968 16 16"><path d="M149.700 974.200v-3.300h3.400M156.800 970.900h3.400v3.300M160.200 977.700v3.300h-3.400M153.100 981h-3.400v-3.300" fill="none" stroke="#0066cc" stroke-width="1.800"/></svg>
<svg class="abs" style="left:196px;top:967px" width="18" height="18" viewBox="196 967 18 18"><path d="M200 976h6M206 971v10M206 971h4M206 976h4M206 981h4" fill="none" stroke="#0066cc" stroke-width="1.300"/><g fill="#0066cc"><circle cx="200.100" cy="976" r="2"/><circle cx="210" cy="971" r="2.100"/><circle cx="210" cy="976" r="2.100"/><circle cx="210" cy="981" r="2.100"/></g></svg>
<svg class="abs" style="left:246px;top:967px" width="18" height="18" viewBox="246 967 18 18"><path d="M255 971v5.500M250 981v-4.500h10v4.500M255 976.500v4.500" fill="none" stroke="#0066cc" stroke-width="1.300"/><g fill="#0066cc"><circle cx="255" cy="971" r="2.100"/><circle cx="250" cy="980.800" r="2.100"/><circle cx="255" cy="980.800" r="2.100"/><circle cx="260" cy="980.800" r="2.100"/></g></svg>
<svg class="abs" style="left:297px;top:968px" width="16" height="16" viewBox="297 968 16 16"><path d="M299.900 969.800L304.300 972.100V981.300L299.900 979.700zM310.200 969.800L305.900 972.100V981.300L310.200 979.700z" fill="#0066cc"/><rect x="304.300" y="972.100" width="1.600" height="9.200" fill="#6ba6e2"/><path d="M299.300 970.600h-0.900v10.900l1.800-0.600 4.900 1.500 4.900-1.500 1.800 0.600v-10.900h-0.900" fill="none" stroke="#0066cc" stroke-width="1"/></svg>

<!-- status bar icons -->
<svg class="abs" style="left:1485px;top:998px" width="16" height="16" viewBox="0 0 16 16"><g fill="none" stroke="#2f2f2f" stroke-width="1.300"><path fill="#fff" d="M2.700 6.300C0.900 7.600 0.800 10.200 1.600 11.100 3.100 12.800 5.500 13.600 8.100 13.600s5-0.800 6.500-2.500c0.800-0.900 0.700-3.500-1.100-4.800"/><circle cx="5.400" cy="5.100" r="2.650" fill="#fff"/><circle cx="10.800" cy="5.100" r="2.650" fill="#fff"/><path d="M6.600 9.300v1.800M9.700 9.300v1.800" stroke-width="1.100"/></g></svg>
<svg class="abs" style="left:1516px;top:998px" width="16" height="16" viewBox="0 0 16 16"><g fill="none" stroke="#3b3b3b" stroke-width="1"><path fill="#fff" d="M2.500 11.300L3.300 9.500V5.800a4.200 4.200 0 0 1 8.400 0V9.500l0.800 1.800z"/><path d="M6 11.700a1.600 1.600 0 0 0 3 0"/></g></svg>

</body>
</html>
